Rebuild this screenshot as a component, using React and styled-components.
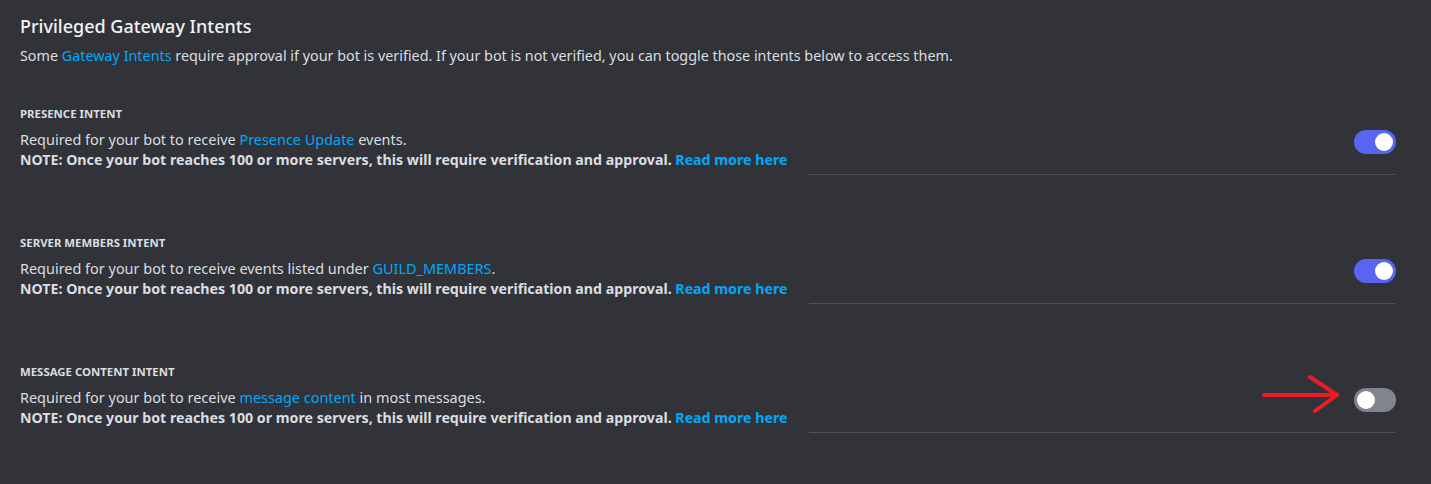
import React from "react";
import styled, { createGlobalStyle } from "styled-components";

const Global = createGlobalStyle`
  html, body { margin: 0; padding: 0; background: #313338; }
  body { font-family: "Noto Sans", "Open Sans", sans-serif; -webkit-font-smoothing: antialiased; }
`;

const Page = styled.div`
  background: #313338;
  min-height: 484px;
  padding: 14px 35px 0 20px;
  box-sizing: border-box;
`;

const Title = styled.h2`
  margin: 0;
  font-size: 18px;
  line-height: 24px;
  font-weight: 500;
  color: #f2f3f5;
`;

const Lead = styled.p`
  margin: 8px 0 0;
  font-size: 14.35px;
  line-height: 20px;
  color: #dbdee1;
`;

const Link = styled.a`
  color: #00a8fc;
  text-decoration: none;
  font-weight: ${(p) => (p.$bold ? 700 : 400)};
`;

const Section = styled.section`
  margin-top: ${(p) => (p.$first ? "40px" : "60px")};
`;

const Heading = styled.h3`
  margin: 0;
  font-size: 11.4px;
  line-height: 16px;
  font-weight: 700;
  text-transform: uppercase;
  color: #dbdee1;
`;

const Row = styled.div`
  display: flex;
  align-items: flex-start;
  justify-content: space-between;
  margin-top: 8px;
`;

const Text = styled.div`
  font-size: 14.45px;
  line-height: 20px;
  color: #dbdee1;
`;

const Note = styled.div`
  font-size: 14.2px;
  font-weight: 700;
  color: #dbdee1;
`;

const ToggleWrap = styled.div`
  position: relative;
`;

const Track = styled.div`
  width: 42px;
  height: 24px;
  border-radius: 12px;
  background: ${(p) => (p.$on ? "#5865f2" : "#80848e")};
  display: flex;
  align-items: center;
  justify-content: ${(p) => (p.$on ? "flex-end" : "flex-start")};
  padding: 0 3px;
  box-sizing: border-box;
`;

const Knob = styled.div`
  width: 18px;
  height: 18px;
  border-radius: 50%;
  background: #ffffff;
`;

const Divider = styled.div`
  height: 1px;
  background: #4e5058;
  margin: 4px 0 0 auto;
  width: 587px;
`;

const Arrow = styled.svg`
  position: absolute;
  right: 54px;
  top: -13px;
  overflow: visible;
`;

function Toggle({ on, arrow }) {
  return (
    <ToggleWrap>
      {arrow && (
        <Arrow width="82" height="40" viewBox="0 0 82 40">
          <g stroke="#ed1c24" strokeWidth="4" strokeLinecap="round" fill="none">
            <line x1="4" y1="20" x2="77" y2="20" />
            <line x1="50" y1="2" x2="77" y2="20" />
            <line x1="77" y1="20" x2="55" y2="36" />
          </g>
        </Arrow>
      )}
      <Track $on={on}>
        <Knob />
      </Track>
    </ToggleWrap>
  );
}

function Intent({ first, title, pre, link, post, on, arrow }) {
  return (
    <Section $first={first}>
      <Heading>{title}</Heading>
      <Row>
        <Text>
          <div>
            {pre}
            <Link href="#">{link}</Link>
            {post}
          </div>
          <Note>
            NOTE: Once your bot reaches 100 or more servers, this will require verification and approval.{" "}
            <Link href="#" $bold>Read more here</Link>
          </Note>
        </Text>
        <Toggle on={on} arrow={arrow} />
      </Row>
      <Divider />
    </Section>
  );
}

export default function App() {
  return (
    <>
      <Global />
      <Page>
        <Title>Privileged Gateway Intents</Title>
        <Lead>
          Some <Link href="#">Gateway Intents</Link> require approval if your bot is verified. If your bot is not
          verified, you can toggle those intents below to access them.
        </Lead>
        <Intent
          first
          title="Presence Intent"
          pre="Required for your bot to receive "
          link="Presence Update"
          post=" events."
          on
        />
        <Intent
          title="Server Members Intent"
          pre="Required for your bot to receive events listed under "
          link="GUILD_MEMBERS"
          post="."
          on
        />
        <Intent
          title="Message Content Intent"
          pre="Required for your bot to receive "
          link="message content"
          post=" in most messages."
          arrow
        />
      </Page>
    </>
  );
}
